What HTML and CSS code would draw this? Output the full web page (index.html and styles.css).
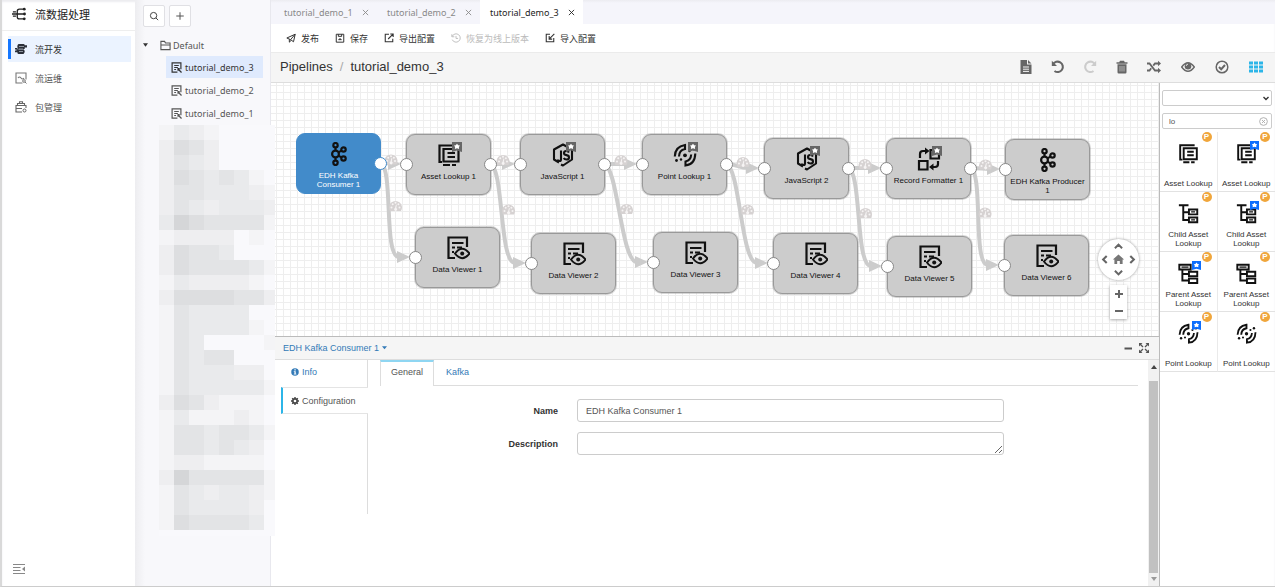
FILE: index.html
```html
<!DOCTYPE html>
<html lang="zh-CN">
<head>
<meta charset="utf-8">
<title>流数据处理</title>
<link rel="stylesheet" href="styles.css">
</head>
<body>
<svg class="defs" aria-hidden="true">
  <symbol id="i-kafka" viewBox="0 0 24 24"><g fill="none" stroke="currentColor" stroke-width="2.200"><circle cx="8.500" cy="12" r="3.400"/><circle cx="8.500" cy="3.200" r="2.200"/><circle cx="8.500" cy="20.800" r="2.200"/><circle cx="16.500" cy="7.500" r="2.200"/><circle cx="16.500" cy="16.500" r="2.200"/><path d="M8.500 5.400v3.400M8.500 15.200v3.400M11.300 10.400l3.200-1.800M11.300 13.600l3.200 1.800"/></g></symbol>
  <symbol id="i-asset" viewBox="0 0 24 24"><path fill="none" stroke="currentColor" stroke-width="2.200" d="M19 2.500H2.500V19H5M6.500 6h15v12.500h-15zM10.500 10h7.500M10.500 14h7.500M6 22h7M15 22h4"/></symbol>
  <symbol id="i-js" viewBox="0 0 24 24"><path fill="none" stroke="currentColor" stroke-width="2.100" stroke-linejoin="round" d="M8 19.500l-5-3V6.500L12 1.500l9 5v10L12 22.500l-2-1M10 7.500v9q0 1.500-1.500 1.500T7 16.500M18 9.500q-1-1.500-2.700-1.500-2.300 0-2.300 1.900 0 1.800 2.500 2.200t2.500 2.300q0 2.100-2.500 2.100-2 0-2.800-1.500"/></symbol>
  <symbol id="i-point" viewBox="0 0 24 24"><g fill="none" stroke="currentColor" stroke-width="2.100"><path d="M1.800 13.500Q2 3.500 12 2v4Q6.200 7 6 13.500M22.300 10.500Q22 21.500 12.500 22.500v-4Q17.800 17.500 18.200 11.500"/></g><g fill="currentColor"><circle cx="12" cy="12.300" r="1.900"/><circle cx="3.500" cy="17.500" r="1.400"/><circle cx="8" cy="16.500" r="1.200"/><circle cx="16.500" cy="8" r="1.200"/><circle cx="20.500" cy="6" r="1.400"/></g></symbol>
  <symbol id="i-format" viewBox="0 0 24 24"><path fill="none" stroke="currentColor" stroke-width="2.200" d="M2 14h8.500v8.500H2zM13.500 3h8.500v8.500h-8.500zM3 11V7q0-3 3-3h3M21 14v3q0 3-3 3h-3"/><path fill="currentColor" d="M8 .5l4.500 3.500L8 7.500zM16.500 16.500L12 20l4.500 3.500z"/></symbol>
  <symbol id="i-viewer" viewBox="0 0 24 24"><path fill="none" stroke="currentColor" stroke-width="2.200" d="M9 22H2.500V1.500h18.500V11M6 7h11.500M6 11.500h3M11 11.500h5M6 16h2"/><path fill="none" stroke="currentColor" stroke-width="2" d="M9 17.500q7-9.500 14.500 0-7.500 9.500-14.500 0z"/><circle cx="16.200" cy="17.500" r="2" fill="currentColor"/></symbol>
  <symbol id="i-child" viewBox="0 0 24 24"><path fill="none" stroke="currentColor" stroke-width="2.200" d="M1 2.500h11M6 2.500V19.500h6M6 10.500h6M12.500 7.500h9.500v5.500h-9.500zM12.500 16.500h9.500V22h-9.500z"/><path stroke="currentColor" stroke-width="1.500" d="M15 10.200h4.500M15 19.200h4.500"/></symbol>
  <symbol id="i-parent" viewBox="0 0 24 24"><path fill="none" stroke="currentColor" stroke-width="2.200" d="M1.500 2h13v5.500h-13zM5 7.500V20h7M5 12.500h7M12.500 10h9.500v5h-9.500zM12.500 17.800h9.500v5h-9.500z"/><path stroke="currentColor" stroke-width="1.500" d="M4 4.700h8"/></symbol>
  <symbol id="i-mark" viewBox="0 0 10 10"><path fill="currentColor" d="M0 0h10v10L5 8.500 0 10z"/><path fill="#fff" d="M5 1.800l1.200 1.400 1.800.4-1.100 1.500.2 1.900L5 6.300 2.900 7l.2-1.900L2 3.600l1.800-.4z"/></symbol>
  <symbol id="i-gauge" viewBox="0 0 14 12"><path fill="#d6d2d2" d="M1.500 11A6.500 6.500 0 1 1 12.500 11z"/><g fill="#f6f4f4"><circle cx="3" cy="7.500" r="1"/><circle cx="4.200" cy="4.200" r="1"/><circle cx="7" cy="2.800" r="1"/><circle cx="9.900" cy="4.200" r="1"/><circle cx="11" cy="7.500" r="1"/><path d="M7.500 4.500l.8.200L7.800 8A1.500 1.500 0 1 1 6.500 8z"/></g></symbol>
  <symbol id="i-doc" viewBox="0 0 12 12"><path fill="none" stroke="currentColor" stroke-width="1.300" d="M7 11H1.200V1h9.600v7M3.500 3.800h5M3.500 6h4M3.500 8.200h2"/><path fill="currentColor" d="M7 6.500h2.500v2L12 11l-1 1-2.500-2.500H7z"/></symbol>
  <symbol id="i-out" viewBox="0 0 12 12"><path fill="none" stroke="currentColor" stroke-width="1.300" d="M6 1.500H1.500v9h9V7M5 7.200l5.500-5.500M7.500 1.200H11v3.500"/></symbol>
  <symbol id="i-in" viewBox="0 0 12 12"><path fill="none" stroke="currentColor" stroke-width="1.300" d="M6 1.500H1.500v9h9V6M11.200 1L5.500 6.800M5 3.700v3.600h3.600"/></symbol>
</svg>

<div class="app">
  <nav class="nav">
    <h1 class="nav-title">
      <svg viewBox="0 0 16 16"><g fill="none" stroke="#222" stroke-width="1.500"><path d="M3 8h11M6 8V5q0-2.500 2.500-2.500h5M6 8v3q0 2.500 2.500 2.500h5M1 5.500h3.500M0 8h3M1 10.500h3.500"/></g><g fill="#222"><circle cx="14" cy="2.500" r="1.600"/><circle cx="14.300" cy="8" r="1.600"/><circle cx="14" cy="13.500" r="1.600"/></g></svg>
      流数据处理
    </h1>
    <a class="nav-item active" href="#"><svg viewBox="0 0 12 12"><g fill="#2b2f38"><path d="M3.500 1h5q1.200 0 1.200 1.300H12v2.200H9.700V6H3.500Q2.300 5.500 2.300 3.500T3.500 1z"/><path d="M0 5h2.500v1.200h6q1.200 1 1.200 2.400T8.500 11h-5Q2.300 11 2.300 9.200H0V7.500h1.500V6.500H0z"/></g><path stroke="#b9c1cc" d="M4 3.500h5M4 6h4M4 8.500h4" stroke-width=".7"/></svg>流开发</a>
    <a class="nav-item" href="#"><svg viewBox="0 0 12 12"><path fill="none" stroke="#777" stroke-width="1.100" d="M7.500 11H1V1h10v6.500M3 6q1.500-2 3 0t3 0"/><circle cx="9" cy="9" r="1.300" fill="none" stroke="#777"/><path stroke="#777" d="M10 10l1.500 1.500"/></svg>流运维</a>
    <a class="nav-item" href="#"><svg viewBox="0 0 12 12"><path fill="none" stroke="#666" stroke-width="1.100" d="M7 11H1V4.500h10V7M2.500 4.500v-2h7v2M4.500 2.500V.8h3v1.700M1 7.500h6"/><circle cx="9.500" cy="9.500" r="1.500" fill="none" stroke="#666"/></svg>包管理</a>
    <button class="nav-collapse" aria-label="收起"><svg viewBox="0 0 12 12"><path stroke="#888" stroke-width="1.200" d="M0 1.500h12M0 4.500h7.500M0 7.500h7.500M0 10.500h12"/><path fill="#888" d="M12 3.500v5L9 6z"/></svg></button>
  </nav>

  <aside class="side">
    <div class="side-tools">
      <button aria-label="搜索"><svg viewBox="0 0 12 12"><circle cx="5.500" cy="5.500" r="3.800" fill="none" stroke="#444" stroke-width="1.200"/><path stroke="#444" stroke-width="1.200" d="M8.300 8.300L11 11"/></svg></button>
      <button aria-label="新增"><svg viewBox="0 0 12 12"><path stroke="#555" stroke-width="1.200" d="M6 1.500v9M1.500 6h9"/></svg></button>
    </div>
    <div class="folder"><button class="twist" aria-label="展开"><svg viewBox="0 0 6 4"><path fill="#333" d="M0 0h6L3 4z"/></svg></button><svg class="folder-icon" viewBox="0 0 12 12"><path fill="none" stroke="#555" stroke-width="1.200" d="M1 10.500v-9h4l1 1.800h5v7.200zM1 5.500h10"/></svg>Default</div>
    <a class="leaf active" href="#"><svg viewBox="0 0 12 12"><use href="#i-doc"/></svg>tutorial_demo_3</a>
    <a class="leaf" href="#"><svg viewBox="0 0 12 12"><use href="#i-doc"/></svg>tutorial_demo_2</a>
    <a class="leaf" href="#"><svg viewBox="0 0 12 12"><use href="#i-doc"/></svg>tutorial_demo_1</a>
    <div class="mosaic" id="mosaic"></div>
  </aside>

  <main class="main">
    <div class="tabs">
      <div class="tab">tutorial_demo_1<button aria-label="关闭"><svg viewBox="0 0 8 8"><path d="M1 1l6 6M7 1L1 7"/></svg></button></div>
      <div class="tab">tutorial_demo_2<button aria-label="关闭"><svg viewBox="0 0 8 8"><path d="M1 1l6 6M7 1L1 7"/></svg></button></div>
      <div class="tab active">tutorial_demo_3<button aria-label="关闭"><svg viewBox="0 0 8 8"><path d="M1 1l6 6M7 1L1 7"/></svg></button></div>
    </div>
    <div class="actions">
      <button><svg viewBox="0 0 12 12"><path fill="none" stroke="currentColor" stroke-width="1.200" d="M1 6L11 1.500 9 10.500 5.500 8zM5.500 8L11 1.500M4 7.500V11l2-2"/></svg>发布</button>
      <button><svg viewBox="0 0 12 12"><path fill="none" stroke="currentColor" stroke-width="1.200" d="M1.500 1.500h9v9.500h-9zM4 1.500V4h4V1.500M4 8h4M6 6v2"/></svg>保存</button>
      <button><svg viewBox="0 0 12 12"><use href="#i-out"/></svg>导出配置</button>
      <button disabled><svg viewBox="0 0 12 12"><path fill="none" stroke="currentColor" stroke-width="1.100" d="M1.500 4A5 5 0 1 1 1.500 8M1 1.500V4.500H4M6 3.500v3h2.500"/></svg>恢复为线上版本</button>
      <button><svg viewBox="0 0 12 12"><use href="#i-in"/></svg>导入配置</button>
    </div>
    <header class="head">
      <div class="crumbs"><a href="#">Pipelines</a><span class="slash">/</span><span>tutorial_demo_3</span></div>
      <div class="head-tools">
        <button aria-label="Notes"><svg viewBox="0 0 14 14"><path fill="currentColor" d="M1.500 0H8v4.500h4.500V14h-11zM9 0l3.500 3.500H9z"/><path stroke="#f5f5f5" d="M4 7h6M4 9.200h6M4 11.400h6"/></svg></button>
        <button aria-label="Undo"><svg viewBox="0 0 14 14"><path fill="none" stroke="currentColor" stroke-width="2.100" d="M2 4.500A5.200 5.200 0 1 1 3.500 11"/><path fill="currentColor" d="M.8.8V6H6z"/></svg></button>
        <button disabled aria-label="Redo"><svg viewBox="0 0 14 14"><path fill="none" stroke="currentColor" stroke-width="2.100" d="M12 4.500A5.200 5.200 0 1 0 10.500 11"/><path fill="currentColor" d="M13.200.8V6H8z"/></svg></button>
        <button aria-label="Delete"><svg viewBox="0 0 14 14"><path fill="currentColor" d="M5 .8h4l.8 1.500h2.700v1.500h-11V2.300h2.700zM2.500 4.300h9v8q0 1.200-1.200 1.200H3.700q-1.200 0-1.200-1.200z"/><path stroke="#ccc" stroke-width=".8" d="M5 6v5.500M7 6v5.500M9 6v5.500"/></svg></button>
        <button aria-label="Shuffle"><svg viewBox="0 0 14 14"><path fill="none" stroke="currentColor" stroke-width="1.800" d="M0 3.500h2.500L8 10.500h3.500M0 10.500h2.500l1.700-2.200M6.300 5.600L8 3.500h3.500"/><path fill="currentColor" d="M11 .7L14 3.500 11 6.300zM11 7.700l3 2.800-3 2.800z"/></svg></button>
        <button aria-label="Preview"><svg viewBox="0 0 14 14"><path fill="none" stroke="currentColor" stroke-width="1.400" d="M.7 7Q7-1.500 13.300 7 7 15.500.7 7z"/><circle cx="7" cy="6.200" r="3.300" fill="currentColor"/><path fill="none" stroke="#f5f5f5" stroke-width=".8" d="M5.200 6q0-1.800 1.800-1.800"/></svg></button>
        <button aria-label="Validate"><svg viewBox="0 0 14 14"><circle cx="7" cy="7" r="5.800" fill="none" stroke="currentColor" stroke-width="1.500"/><path fill="none" stroke="currentColor" stroke-width="2" d="M4 7l2.200 2.200L10 5"/></svg></button>
        <button class="on" aria-label="Stage library"><svg viewBox="0 0 14 14"><path fill="currentColor" d="M0 1.500h4v3H0zM5 1.500h4v3H5zM10 1.500h4v3h-4zM0 5.500h4v3H0zM5 5.500h4v3H5zM10 5.500h4v3h-4zM0 9.500h4v3H0zM5 9.500h4v3H5zM10 9.500h4v3h-4z"/></svg></button>
      </div>
    </header>

    <div class="work">
      <div class="work-main">
        <div class="canvas" id="canvas">
          <svg class="edges" id="edges"></svg>
          <div class="pan">
            <svg viewBox="0 0 40 40"><g fill="none" stroke="#666" stroke-width="2"><path d="M16.500 9l3.500-3.500L23.500 9M16.500 31l3.500 3.500 3.500-3.500M8.500 16.500L5 20l3.500 3.500M31.500 16.500L35 20l-3.500 3.500"/></g><path fill="#777" d="M20 15l5.500 5h-1.500v4.500h-2.700v-3h-2.600v3H16V20h-1.500z"/></svg>
          </div>
          <div class="zoom">
            <button aria-label="Zoom in"><svg viewBox="0 0 8 8"><path d="M4 0v8M0 4h8"/></svg></button>
            <button aria-label="Zoom out"><svg viewBox="0 0 8 8"><path d="M0 4h8"/></svg></button>
          </div>
        </div>

        <section class="props">
          <div class="props-head">
            <button class="link">EDH Kafka Consumer 1<svg viewBox="0 0 6 4"><path fill="currentColor" d="M0 0h6L3 3.500z"/></svg></button>
            <div class="win">
              <button aria-label="Minimize"><svg viewBox="0 0 10 10"><path stroke="#555" stroke-width="2" d="M1.500 5.500h7.500"/></svg></button>
              <button aria-label="Maximize"><svg viewBox="0 0 10 10"><path fill="#555" d="M0 0h3.500L0 3.500zM10 0v3.500L6.500 0zM0 10V6.500L3.500 10zM10 10H6.500L10 6.500z"/><path stroke="#555" stroke-width="1.300" d="M1 1l3 3M9 1L6 4M1 9l3-3M9 9L6 6"/></svg></button>
            </div>
          </div>
          <div class="props-body">
            <div class="vtabs">
              <button class="vtab link"><svg viewBox="0 0 10 10"><circle cx="5" cy="5" r="4.700" fill="currentColor"/><path fill="#fff" d="M4.200 1.500h1.700V3H4.200zM3.500 4h2.400v3.200h.8v1H3.500v-1h.8V5h-.8z"/></svg>Info</button>
              <button class="vtab active"><svg viewBox="0 0 10 10"><circle cx="5" cy="5" r="2.700" fill="none" stroke="#444" stroke-width="2"/><path stroke="#444" stroke-width="1.800" d="M5 0v2M5 8v2M0 5h2M8 5h2M1.500 1.500l1.300 1.300M7.200 7.200l1.300 1.300M8.500 1.500L7.200 2.800M2.800 7.200L1.500 8.500"/></svg>Configuration</button>
              <div class="vrest"></div>
            </div>
            <div class="pane">
              <div class="htabs">
                <button class="htab active">General</button>
                <button class="htab link">Kafka</button>
              </div>
              <form class="form">
                <label for="f-name">Name</label><input id="f-name" type="text" value="EDH Kafka Consumer 1">
                <label for="f-desc">Description</label><textarea id="f-desc" rows="1"></textarea>
              </form>
            </div>
            <div class="scroll">
              <svg viewBox="0 0 6 4"><path fill="#444" d="M0 4h6L3 0z"/></svg>
              <div class="thumb"></div>
              <svg viewBox="0 0 6 4"><path fill="#999" d="M0 0h6L3 4z"/></svg>
            </div>
          </div>
        </section>
      </div>

      <aside class="lib">
        <div class="picker">
          <select aria-label="Stage type"><option></option></select>
          <svg viewBox="0 0 6 5"><path fill="none" stroke="#333" stroke-width="1.400" d="M.5 1L3 3.500 5.500 1"/></svg>
        </div>
        <div class="search"><input type="text" value="lo" aria-label="Search stages"><button aria-label="Clear"><svg viewBox="0 0 10 10"><g fill="none" stroke="#aaa"><circle cx="5" cy="5" r="4.300"/><path d="M3.300 3.300l3.400 3.400M6.700 3.300L3.300 6.700"/></g></svg></button></div>
        <div class="stages" id="stages"></div>
      </aside>
    </div>
  </main>
</div>
<script src="app.js"></script>
</body>
</html>
```

FILE: styles.css
```css
* { box-sizing: border-box; }
body { margin: 0; font-family: "Liberation Sans", "Noto Sans CJK SC", sans-serif; font-size: 9px; color: #333; background: #fff; }
button { border: 0; padding: 0; background: none; font: inherit; color: inherit; display: inline-flex; align-items: center; justify-content: center; }
a { color: inherit; text-decoration: none; }
svg { display: block; flex: none; }
.defs { position: absolute; width: 0; height: 0; }

.app { display: flex; min-height: 100vh; border-left: 2px solid #d9d9d9; border-bottom: 1px solid #ccc; box-shadow: inset 0 2px 2px #ececf0; }

.nav { width: 133px; flex: none; display: flex; flex-direction: column; }
.nav-title { margin: 0 0 5px; height: 31px; padding: 0 10px 3px; display: flex; align-items: center; gap: 9px; font-size: 11px; font-weight: 400; border-bottom: 1px solid #eee; color: #222; }
.nav-title svg { width: 14px; height: 14px; }
.nav-item { display: flex; align-items: center; gap: 8px; height: 26px; margin: 0 4px 3px 6px; padding-left: 7px; color: #555; }
.nav-item svg { width: 12px; height: 12px; }
.nav-item.active { background: linear-gradient(#1677ff, #1677ff) 0 3px / 3px 20px no-repeat #ebf3ff; color: #333; }
.nav-collapse { margin: auto auto 11px 11px; }
.nav-collapse svg { width: 12px; height: 12px; }

.side { position: relative; z-index: 2; width: 136px; flex: none; padding-top: 5px; background: linear-gradient(90deg, #ededf0, #f8f8fb 10px); border-right: 1px solid #e8e8ee; font-family: "Noto Sans", "Noto Sans CJK SC", sans-serif; color: #555; }
.side-tools { display: flex; gap: 4px; padding-left: 8px; margin-bottom: 8px; }
.side-tools button { width: 22px; height: 22px; background: #fff; border: 1px solid #e0e0e4; border-radius: 2px; }
.side-tools svg { width: 10px; height: 10px; }
.folder { display: flex; align-items: center; height: 20px; padding-left: 8px; font-size: 9px; margin-bottom: 1px; }
.twist svg { width: 5px; height: 4px; }
.folder-icon { width: 11px; height: 11px; margin: 0 2px 0 12px; }
.leaf { display: flex; align-items: center; gap: 3px; height: 22px; margin: 0 7px 1px 31px; padding-left: 5px; font-size: 9px; }
.leaf svg { width: 11px; height: 11px; }
.leaf.active { background: #dfeafd; color: #333; }
.mosaic { position: absolute; left: 24px; top: 125px; width: 116px; height: 411px; display: grid; grid-template-columns: repeat(7, 15px) 11px; grid-auto-rows: 15px; background: #f9f9fc; }
.m-b { background: #f4f4f6; }
.m-c { background: #eeeef0; }
.m-d { background: #e9eaec; }
.m-e { background: #e3e4e6; }
.m-f { background: #dddee0; }
.m-g { background: #d5d6d8; }

.main { flex: 1; min-width: 0; display: flex; flex-direction: column; }
.tabs { height: 24px; display: flex; background: linear-gradient(#ececf1, #f5f5fb 3px); font-family: "Noto Sans", sans-serif; font-size: 9px; color: #888; }
.tab { display: flex; align-items: center; gap: 9px; width: 103px; padding-left: 13px; }
.tab svg { width: 7px; height: 7px; stroke: currentColor; }
.tab.active { background: #fff; color: #222; margin-left: 3px; padding-left: 10px; }
.actions { height: 28px; display: flex; align-items: center; gap: 16px; padding-left: 15px; color: #333; }
.actions button { gap: 5px; }
.actions button:disabled { color: #bbb; }
.actions svg { width: 10px; height: 10px; }
.head { height: 31px; display: flex; align-items: center; justify-content: space-between; padding: 0 12px 2px 9px; background: #f5f5f5; border-top: 1px solid #ebebeb; border-bottom: 1px solid #ddd; }
.crumbs { display: flex; gap: 7px; font-size: 13px; color: #333; }
.slash { color: #aaa; }
.head-tools { display: flex; gap: 18px; color: #666; }
.head-tools svg { width: 14px; height: 14px; }
.head-tools button:nth-child(n+6) { margin-left: 2px; }
.head-tools button:disabled { color: #ccc; }
.head-tools .on { color: #2cb5e8; }

.work { flex: 1; display: flex; min-height: 0; }
.work-main { flex: 1; min-width: 0; display: flex; flex-direction: column; }
.canvas { position: relative; height: 253px; overflow: hidden; background: linear-gradient(90deg, #eee 1px, transparent 1px) 5px 0 / 7px 7px, linear-gradient(#eee 1px, transparent 1px) 0 2px / 7px 7px, #fff; }
.edges { position: absolute; left: 0; top: 0; width: 100%; height: 100%; }
.node { position: absolute; width: 85px; height: 61px; padding-top: 8px; background: #ccc; border: 1px solid #999; border-radius: 9px; box-shadow: 0 0 0 1px rgba(153, 153, 153, .4); display: flex; flex-direction: column; align-items: center; gap: 5px; color: #111; font-size: 8px; line-height: 9px; text-align: center; }
.node.selected { background: #428bca; border-color: #428bca; box-shadow: none; color: #fff; }
.node.selected .glyph { color: #111; }
.node .label { max-width: 80px; }
.node.selected .label { max-width: 60px; }
.glyph { position: relative; width: 24px; height: 24px; }
.glyph svg { width: 24px; height: 24px; }
.glyph .mark { position: absolute; right: -1px; top: -1px; width: 10px; height: 10px; color: #666; }
.port { position: absolute; top: 23px; width: 13px; height: 13px; border-radius: 50%; background: #fff; border: 1px solid #888; }
.port.in { left: -7px; }
.port.out { right: -7px; }
.selected .port { border-color: #428bca; }
.pan { position: absolute; right: 20px; bottom: 56px; width: 41px; height: 41px; border-radius: 50%; background: #fff; box-shadow: 0 0 3px #999; }
.zoom { position: absolute; right: 32px; bottom: 17px; width: 17px; height: 34px; display: flex; flex-direction: column; background: #fff; box-shadow: 0 1px 3px #aaa; }
.zoom button { flex: 1; }
.zoom svg { width: 8px; height: 8px; stroke: #666; stroke-width: 2; }

.props { flex: 1; display: flex; flex-direction: column; border-top: 1px solid #bbb; }
.props-head { height: 23px; display: flex; align-items: center; justify-content: space-between; padding: 0 10px 0 12px; background: #f5f5f5; border-bottom: 1px solid #ddd; }
.link { color: #337ab7; }
.props-head .link { gap: 3px; }
.props-head .link svg { width: 5px; height: 4px; }
.win { display: flex; gap: 6px; }
.win svg { width: 10px; height: 10px; }
.props-body { flex: 1; display: flex; }
.vtabs { width: 87px; margin-left: 10px; display: flex; flex-direction: column; }
.vtab { height: 27px; padding: 0 0 4px 10px; gap: 3px; justify-content: flex-start; border-right: 1px solid #ddd; }
.vtab svg { width: 8px; height: 8px; }
.vtab.active { padding: 0 0 0 8px; color: #555; border: 1px solid #e4e4e4; border-left: 2px solid #2cb5e8; border-right: 0; }
.vrest { height: 100px; border-right: 1px solid #ddd; }
.pane { flex: 1; padding: 0 10px 0 12px; }
.htabs { height: 26px; display: flex; border-bottom: 1px solid #ddd; }
.htab { height: 26px; padding: 0 12px 3px; }
.htab.active { padding: 0 10px 5px; background: #fff; color: #555; border: 1px solid #ddd; border-top: 2px solid #8fd6f2; border-bottom: 0; }
.form { display: grid; grid-template-columns: 178px minmax(0, 427px); column-gap: 19px; row-gap: 10px; align-items: center; padding-top: 13px; }
.form label { text-align: right; font-weight: 700; }
.form input, .form textarea { display: block; width: 100%; height: 23px; padding: 4px 8px; border: 1px solid #ccc; border-radius: 3px; background: #fff; font: inherit; color: #555; resize: vertical; }
.scroll { width: 11px; display: flex; flex-direction: column; align-items: center; padding: 5px 0; background: #f1f1f1; }
.scroll svg { width: 6px; height: 4px; }
.thumb { flex: 1; width: 9px; margin: 12px 0 4px; background: #c1c1c1; }

.lib { width: 116px; flex: none; border-left: 1px solid #bbb; padding-top: 7px; }
.picker { position: relative; width: 110px; margin: 0 3px 7px 2px; }
.picker select { display: block; width: 100%; height: 16px; padding: 0 14px 0 4px; border: 1px solid #ccc; border-radius: 2px; background: #fff; font: inherit; appearance: none; }
.picker svg { position: absolute; right: 3px; top: 6px; width: 6px; height: 5px; pointer-events: none; }
.search { display: flex; align-items: center; width: 110px; height: 16px; margin: 0 3px 3px 2px; padding-right: 3px; border: 1px solid #ccc; border-radius: 2px; }
.search input { flex: 1; min-width: 0; border: 0; outline: 0; padding: 0 6px; background: none; font: inherit; font-size: 8px; color: #555; }
.search svg { width: 9px; height: 9px; }
.stages { display: grid; grid-template-columns: 1fr 1fr; grid-auto-rows: 60px; }
.stage { position: relative; display: flex; flex-direction: column; align-items: center; justify-content: space-between; padding: 11px 3px 3px; border-bottom: 1px solid #e2e2e2; font-size: 8px; line-height: 9px; color: #333; text-align: center; }
.stage:nth-child(odd) { border-right: 1px solid #eaeaea; }
.stage .glyph, .stage .glyph svg { width: 21px; height: 21px; }
.stage .glyph { color: #111; }
.stage .glyph .mark { right: -2px; top: -2px; width: 9px; height: 9px; color: #0d6efd; }
.badge { position: absolute; right: 5px; top: 0; width: 10px; height: 10px; border-radius: 50%; background: #f0a63c; color: #fff; font-size: 8px; font-weight: 700; line-height: 10px; }
```

FILE: app.js
```js
const nodes = [
  { x: 25, y: 50, icon: 'kafka', label: 'EDH Kafka Consumer 1', out: true, selected: true },
  { x: 135, y: 51, icon: 'asset', label: 'Asset Lookup 1', mark: true, in: true, out: true },
  { x: 249, y: 51, icon: 'js', label: 'JavaScript 1', mark: true, in: true, out: true },
  { x: 371, y: 51, icon: 'point', label: 'Point Lookup 1', mark: true, in: true, out: true },
  { x: 493, y: 55, icon: 'js', label: 'JavaScript 2', mark: true, in: true, out: true },
  { x: 615, y: 55, icon: 'format', label: 'Record Formatter 1', mark: true, in: true, out: true },
  { x: 734, y: 56, icon: 'kafka', label: 'EDH Kafka Producer 1', in: true },
  { x: 144, y: 144, icon: 'viewer', label: 'Data Viewer 1', in: true },
  { x: 260, y: 150, icon: 'viewer', label: 'Data Viewer 2', in: true },
  { x: 382, y: 149, icon: 'viewer', label: 'Data Viewer 3', in: true },
  { x: 502, y: 150, icon: 'viewer', label: 'Data Viewer 4', in: true },
  { x: 616, y: 153, icon: 'viewer', label: 'Data Viewer 5', in: true },
  { x: 733, y: 152, icon: 'viewer', label: 'Data Viewer 6', in: true }
];
const stages = [
  ['asset', 'Asset Lookup', false], ['asset', 'Asset Lookup', true],
  ['child', 'Child Asset Lookup', false], ['child', 'Child Asset Lookup', true],
  ['parent', 'Parent Asset Lookup', true], ['parent', 'Parent Asset Lookup', false],
  ['point', 'Point Lookup', true], ['point', 'Point Lookup', false]
];
const shades = [
  'bdcbaaaa', 'cfecaaaa', 'cedcaaaa', 'cfededba', 'ceedddcb', 'cedcdddc', 'dgfeeeeb', 'bccccaba',
  'cfeedaaa', 'cfeeeedb', 'bdccccba', 'cffffeec', 'beddddaa', 'beddddba', 'bedaaaab', 'bedeeaaa',
  'bedddcca', 'bedddddb', 'cfecbbba', 'bdbbbcba', 'beedeedb', 'beededca', 'bccbbbba', 'cgeeeeeb',
  'bedcddcb', 'beddddca', 'bfeeeeda'
];

const glyph = (icon, mark) =>
  `<div class="glyph"><svg><use href="#i-${icon}"/></svg>${mark ? '<svg class="mark"><use href="#i-mark"/></svg>' : ''}</div>`;

document.getElementById('mosaic').innerHTML =
  [...shades.join('')].map(s => `<i class="m-${s}"></i>`).join('');

document.getElementById('stages').innerHTML = stages.map(([icon, label, mark]) =>
  `<div class="stage">${glyph(icon, mark)}<span class="badge">P</span><span>${label}</span></div>`).join('');

const edge = (a, b) => {
  const x1 = a.x + 84, y1 = a.y + 30, x2 = b.x, y2 = b.y + 30;
  const end = x2 - 16;
  const far = y2 - y1 > 40;
  const path = far
    ? `M${x1} ${y1}C${x1 + 14} ${y1 + 3} ${x2 - 32} ${y2} ${end} ${y2}`
    : `M${x1} ${y1}C${x1 + 12} ${y1} ${x1 + 12} ${y2} ${end} ${y2}`;
  return `<path d="${path}" fill="none" stroke="#ccc" stroke-width="4"/>
    <path d="M${end - 2} ${y2 - 6}L${x2 - 5} ${y2}L${end - 2} ${y2 + 6}z" fill="#ccc"/>
    <use href="#i-gauge" x="${(x1 + x2) / 2 - 9}" y="${(y1 + y2) / 2 - 10}" width="14" height="12"/>`;
};
let edges = '';
for (let i = 0; i < 6; i++) {
  edges += edge(nodes[i], nodes[i + 7]) + edge(nodes[i], nodes[i + 1]);
}
document.getElementById('edges').innerHTML = edges;

document.getElementById('canvas').insertAdjacentHTML('beforeend', nodes.map(n =>
  `<div class="node${n.selected ? ' selected' : ''}" style="left:${n.x}px;top:${n.y}px">
    ${glyph(n.icon, n.mark)}<span class="label">${n.label}</span>
    ${n.in ? '<i class="port in"></i>' : ''}${n.out ? '<i class="port out"></i>' : ''}
  </div>`).join(''));
```
